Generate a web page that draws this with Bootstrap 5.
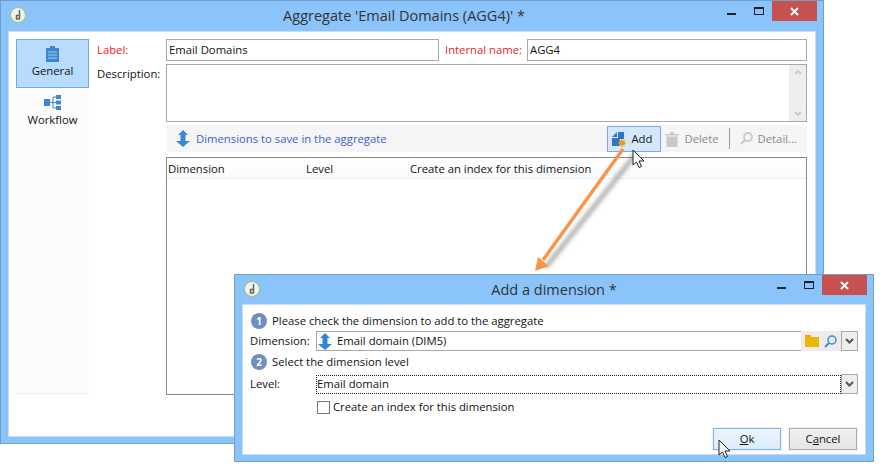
<!DOCTYPE html>
<html><head><meta charset="utf-8">
<link href="https://cdn.jsdelivr.net/npm/bootstrap@5.3.0/dist/css/bootstrap.min.css" rel="stylesheet">
<style>
html,body{margin:0;background:#fff;width:883px;height:471px;overflow:hidden}
body{font-family:"Open Sans","Noto Sans",sans-serif;font-size:11.3px;color:#111;position:relative;line-height:14px}
.wn{position:absolute;background:#8ac4fa;border:1px solid #6f9fcb;display:flex;flex-direction:column}
.wn-main{left:0;top:0;width:824px;height:444px}
.wn-dlg{left:234px;top:274px;width:640px;height:188px}
.ttl{height:30px;position:relative;display:flex;align-items:center;justify-content:center;flex:none;font-size:14.500px;color:#333}
.wn-main .ttl{padding-right:16px}
.wn-dlg .ttl{height:29px}
.logo{position:absolute;left:9px;top:6px}
.cx{position:absolute;right:6px;top:0;width:45px;height:20px;background:#c75050;color:#fff;display:flex;align-items:center;justify-content:center}
.mn{position:absolute;right:87px;top:12px;width:9px;height:2px;background:#222}
.mx{position:absolute;right:59px;top:6px;width:10px;height:8px;border:1px solid #222;border-top-width:2px}
.clnt{flex:1;margin:0 7px 6px;background:#fff;border:1px solid #c9ddef;position:relative;min-height:0}
.wn-main .clnt{display:flex;padding:7px 8px 0 7px}
.tabs{width:73px;height:355px;background:#fcfcfc;border-bottom:1px solid #e6f0fb;flex:none;display:flex;flex-direction:column;align-items:center}
.tb{width:73px;height:49px;display:flex;flex-direction:column;align-items:center;padding-top:6px;gap:2px}
.tb.on{background:#b9dcfd;border:1px solid #6eaae6}
.tb+.tb{padding-top:7px;gap:3px}
.tb svg{display:block}
.frm{flex:1;min-width:0;margin-left:8px;display:flex;flex-direction:column}
.rw{display:flex;align-items:center}
.lbl{width:69px;flex:none}
.red{color:#f11c2a}
.inp{border:1px solid #a8a8a8;height:22px;background:#fff;padding:0 2px;display:flex;align-items:center;flex:none}
.inp-label{width:273px}
.inp-name{flex:1 1 0;min-width:0}
.int-lbl{width:82px;margin-left:6px;flex:none}
.desc-lbl{position:absolute;margin-top:6px}
.desc{height:58px;margin:3px 0 3px 69px;border:1px solid #a8a8a8;display:flex;justify-content:flex-end;flex-grow:1}
.sb{width:17px;background:#eee;display:flex;flex-direction:column;justify-content:space-between;align-items:center;padding:5px 0}
.tbar{margin-left:70px;height:27px;background:#f5f5f5;display:flex;align-items:center;padding-left:9px;color:#3f5fcb;flex:none}
.tt{margin-left:6px}
.act{display:flex;align-items:center;gap:5px;color:#8a8a8a;height:26px}
.add{border:1px solid #75aeea;background:#d5e8fa;color:#111;width:54px;padding-left:4px;margin-left:auto}
.del{margin-left:4px}
.sep{width:1px;height:21px;background:#999;margin:0 10px 0 10px}
.det{margin-right:10px}
.lst{margin:5px 0 0 69px;height:238px;border:1px solid #8a8a8a;flex:none}
.hd{display:flex;height:21px;align-items:center;background:linear-gradient(#fff,#fafbfd);border-bottom:1px solid #e6f0fb}
.hd span{padding-left:1px;border-right:1px solid #eef2f8;height:21px;line-height:21px;flex:none}
.c1{width:138px}.c2{width:104px}.c3{width:206px}
.wn-dlg .clnt{padding:6px 7px 0 7px;display:flex;flex-direction:column}
.step{display:flex;align-items:center;gap:5px;height:20px;margin-left:1px}
.num{width:16px;height:16px;border-radius:50%;background:#6e8fc0;color:#fff;font-weight:700;font-size:10px;display:flex;align-items:center;justify-content:center}
.f2{display:flex;align-items:center;height:20px;margin:0 0 1px}
.f2 .l2{width:66px;flex:none}
.box{flex:1;height:20px;border:1px solid #a8a8a8;border-right:0;display:flex;align-items:center;gap:5px;padding-left:1px}
.icons{width:40px;height:20px;background:#ececec;display:flex;align-items:center;justify-content:space-around;flex:none;padding:0 1px}
.dd{width:17px;height:20px;background:#eee;border:1px solid #a8a8a8;display:flex;align-items:center;justify-content:center;flex:none}
.foc{flex:1;height:19px;border:1px dotted #222;display:flex;align-items:center}
.lvl{margin-top:2px}
.chk{display:flex;align-items:center;gap:3px;margin:4px 0 0 67px;height:16px}
.cb{width:13px;height:13px;border:1px solid #777;background:#fff;display:block}
.btns{position:absolute;right:8px;bottom:4px;display:flex;gap:8px}
.bn{width:68px;height:22px;display:flex;align-items:center;justify-content:center;border:1px solid #acacac;background:linear-gradient(#f0f0f0,#e5e5e5);box-shadow:0 0 0 1px #f2f2f2}
.bn.ok{border-color:#7eb4ea;background:linear-gradient(#ecf4fc,#dcecfc)}
.over{position:absolute;left:0;top:0;pointer-events:none}
</style></head><body>

<div class="wn wn-main">
 <div class="ttl"><svg class="logo" width="16" height="16" viewBox="0 0 16 16"><circle cx="8" cy="8" r="7.500" fill="#f2f2ee" stroke="#9bc36a"/><path d="M9.500 3v9.500M9.500 8.500H6.500v3.500h3" stroke="#666" stroke-width="1.500" fill="none"/></svg>Aggregate 'Email Domains (AGG4)' *
  <span class="mn"></span><span class="mx"></span>
  <span class="cx"><svg width="9" height="9" viewBox="0 0 9 9"><path d="M1 1l7 7M8 1l-7 7" stroke="#fff" stroke-width="2"/></svg></span></div>
 <div class="clnt">
  <div class="tabs">
   <div class="tb on"><svg width="13" height="16" viewBox="0 0 13 16"><path d="M0 2h4V0h5v2h4v14H0z" fill="#3d86d2"/><path d="M2 6h9M2 9h9M2 12h9" stroke="#a9cdf0"/></svg><span>General</span></div>
   <div class="tb"><svg width="17" height="15" viewBox="0 0 17 15"><path d="M0 4h6v7H0zM12 0h5v4h-5zM12 5.500h5v4h-5zM12 11h5v4h-5z" fill="#3d86d2"/><path d="M6 7.500h3M9 2v11M9 2h3M9 7.500h3M9 13h3" stroke="#3d86d2" fill="none"/></svg><span>Workflow</span></div>
  </div>
  <div class="frm">
   <div class="rw"><span class="lbl red">Label:</span><div class="inp inp-label">Email Domains</div><span class="red int-lbl">Internal name:</span><div class="inp inp-name">AGG4</div></div>
   <div class="d-flex"><span class="lbl desc-lbl">Description:</span><div class="desc"><div class="sb"><svg width="8" height="5" viewBox="0 0 8 5"><path d="M1 4l3-3 3 3" stroke="#ccc" stroke-width="2" fill="none"/></svg><svg width="8" height="5" viewBox="0 0 8 5"><path d="M1 1l3 3 3-3" stroke="#ccc" stroke-width="2" fill="none"/></svg></div></div></div>
   <div class="tbar"><svg width="14" height="17" viewBox="0 0 14 17"><path d="M7 0l5 5H9.500v6H14l-7 6-7-6h4.500V5H2z" fill="#3d86d2"/></svg><span class="tt">Dimensions to save in the aggregate</span>
    <div class="act add"><svg width="14" height="16" viewBox="0 0 14 16"><path d="M0 6l5-5v5zM6 1h6v7H8v7H0V7h6z" fill="#2f77c4"/><circle cx="10" cy="12" r="2.800" fill="#f39a12"/><path d="M10 8v8M6 12h8M7.200 9.200l5.600 5.600M12.800 9.200l-5.600 5.600" stroke="#f39a12"/></svg><span>Add</span></div>
    <div class="act del"><svg width="14" height="16" viewBox="0 0 14 16"><path d="M0 3h14v1.500H0zM5 1h4v2H5zM1.500 5.500h11V16h-11z" fill="#c9c9c9"/></svg><span>Delete</span></div>
    <span class="sep"></span>
    <div class="act det"><svg width="13" height="13" viewBox="0 0 13 13"><circle cx="8" cy="5" r="4" fill="none" stroke="#c9c9c9" stroke-width="1.800"/><path d="M5 8l-4 4" stroke="#c9c9c9" stroke-width="2.200"/></svg><span>Detail...</span></div>
   </div>
   <div class="lst"><div class="hd"><span class="c1">Dimension</span><span class="c2">Level</span><span class="c3">Create an index for this dimension</span></div></div>
  </div>
 </div>
</div>

<div class="wn wn-dlg">
 <div class="ttl"><svg class="logo" width="16" height="16" viewBox="0 0 16 16"><circle cx="8" cy="8" r="7.500" fill="#f2f2ee" stroke="#9bc36a"/><path d="M9.500 3v9.500M9.500 8.500H6.500v3.500h3" stroke="#666" stroke-width="1.500" fill="none"/></svg>Add a dimension *
  <span class="mn"></span><span class="mx"></span>
  <span class="cx"><svg width="9" height="9" viewBox="0 0 9 9"><path d="M1 1l7 7M8 1l-7 7" stroke="#fff" stroke-width="2"/></svg></span></div>
 <div class="clnt">
  <div class="step"><span class="num">1</span>Please check the dimension to add to the aggregate</div>
  <div class="f2"><span class="l2">Dimension:</span><div class="box"><svg width="14" height="17" viewBox="0 0 14 17"><path d="M7 0l5 5H9.500v6H14l-7 6-7-6h4.500V5H2z" fill="#2f86d6"/></svg><span>Email domain (DIM5)</span></div><div class="icons"><svg width="14" height="12" viewBox="0 0 14 12"><path d="M0 0h6v2h8v10H0z" fill="#edb800"/><path d="M0 0h6v2H0z" fill="#f59a23"/></svg><svg width="13" height="13" viewBox="0 0 13 13"><circle cx="8" cy="5" r="4" fill="none" stroke="#3d8ad6" stroke-width="1.500"/><path d="M5 8l-4 4" stroke="#3d8ad6" stroke-width="2"/></svg></div><div class="dd"><svg width="9" height="6" viewBox="0 0 9 6"><path d="M1 1l3.500 3.500L8 1" stroke="#555" stroke-width="2" fill="none"/></svg></div></div>
  <div class="step"><span class="num">2</span>Select the dimension level</div>
  <div class="f2 lvl"><span class="l2">Level:</span><div class="foc">Email domain</div><div class="dd"><svg width="9" height="6" viewBox="0 0 9 6"><path d="M1 1l3.500 3.500L8 1" stroke="#555" stroke-width="2" fill="none"/></svg></div></div>
  <div class="chk"><span class="cb"></span>Create an index for this dimension</div>
  <div class="btns"><div class="bn ok"><span><u>O</u>k</span></div><div class="bn"><span>C<u>a</u>ncel</span></div></div>
 </div>
</div>

<svg class="over" width="883" height="471" viewBox="0 0 883 471">
 <defs><filter id="blr" x="-30%" y="-30%" width="160%" height="160%"><feGaussianBlur stdDeviation="2"/></filter></defs>
 <path d="M630 151l-90 113" stroke="#555" stroke-opacity=".55" stroke-width="4" filter="url(#blr)" transform="translate(6 3)" fill="none"/>
 <path d="M623 149L543 260" stroke="#f7964a" stroke-width="3.500" fill="none"/>
 <path d="M535 271l3-14 11 9z" fill="#f7964a"/>
 <path d="M633 150v15l3.500-3 2.500 5.500 2.500-1-2.500-5.500h5z" fill="#fff" stroke="#222" stroke-width="1"/>
 <path d="M719 440v15l3.500-3 2.500 5.500 2.500-1-2.500-5.500h5z" fill="#fff" stroke="#222" stroke-width="1"/>
</svg>
</body></html>
